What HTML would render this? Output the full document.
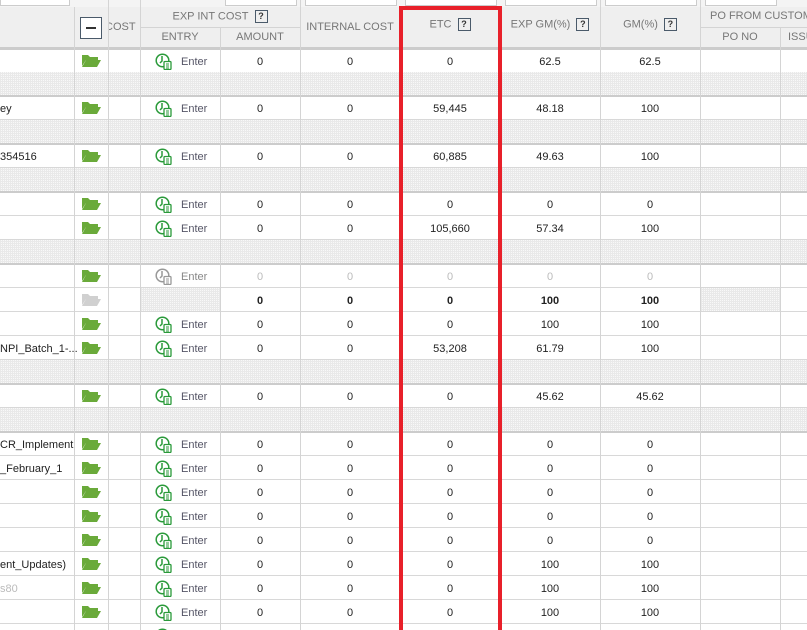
<!DOCTYPE html><html><head><style>
html,body{margin:0;width:807px;height:630px;overflow:hidden}
body{background:#fff;font-family:"Liberation Sans",sans-serif;font-size:11px;color:#222;position:relative}
.a{position:absolute}
.hd{position:absolute;left:0;top:7px;width:807px;height:40px;background:#efefef;border-bottom:3px solid #ccc}
.ht{position:absolute;color:#777;font-size:11px;text-align:center}
.q{display:inline-block;width:11px;height:11px;border:1px solid #4a5a6a;font-size:9px;line-height:11px;text-align:center;color:#333;margin-left:6px;vertical-align:middle;font-weight:bold}
.vl{position:absolute;top:0;width:1px;background:#d4d4d4;height:630px}
.row{position:absolute;left:0;width:807px;height:24px}
.dot{background-color:#f8f8f8;background-image:repeating-linear-gradient(0deg,#e9e9e9 0 1px,transparent 1px 2px),repeating-linear-gradient(90deg,#e9e9e9 0 1px,transparent 1px 2px)}
.c{position:absolute;top:1px;height:24px;line-height:24px;text-align:center}
.hl{position:absolute;left:0;width:807px;background:#ccc}
</style></head><body>
<div class="a" style="left:0;top:0;width:807px;height:7px;background:#f4f4f4"></div>
<div class="a" style="left:0;top:-3px;width:68px;height:7px;border:1px solid #ccc;background:#fff"></div>
<div class="a" style="left:225px;top:-3px;width:70px;height:7px;border:1px solid #ccc;background:#fff"></div>
<div class="a" style="left:305px;top:-3px;width:90px;height:7px;border:1px solid #ccc;background:#fff"></div>
<div class="a" style="left:405px;top:-3px;width:90px;height:7px;border:1px solid #ccc;background:#fff"></div>
<div class="a" style="left:505px;top:-3px;width:90px;height:7px;border:1px solid #ccc;background:#fff"></div>
<div class="a" style="left:605px;top:-3px;width:90px;height:7px;border:1px solid #ccc;background:#fff"></div>
<div class="a" style="left:705px;top:-3px;width:70px;height:7px;border:1px solid #ccc;background:#fff"></div>
<div class="hd"></div>
<div class="a" style="left:140px;top:27px;width:160px;height:1px;background:#d4d4d4"></div>
<div class="a" style="left:700px;top:27px;width:107px;height:1px;background:#d4d4d4"></div>
<div class="ht" style="left:140px;top:10px;width:160px">EXP INT COST<span class="q">?</span></div>
<div class="ht" style="left:140px;top:31px;width:80px">ENTRY</div>
<div class="ht" style="left:220px;top:31px;width:80px">AMOUNT</div>
<div class="ht" style="left:300px;top:21px;width:100px">INTERNAL COST</div>
<div class="ht" style="left:400px;top:18px;width:100px">ETC<span class="q">?</span></div>
<div class="ht" style="left:500px;top:18px;width:100px">EXP GM(%)<span class="q">?</span></div>
<div class="ht" style="left:600px;top:18px;width:100px">GM(%)<span class="q">?</span></div>
<div class="ht" style="left:710px;top:10px;width:97px;text-align:left;white-space:nowrap;overflow:hidden">PO FROM CUSTOMER</div>
<div class="ht" style="left:700px;top:31px;width:80px">PO NO</div>
<div class="ht" style="left:788px;top:31px;text-align:left">ISSUE</div>
<div class="a" style="left:109px;top:21px;width:31px;overflow:hidden;color:#777;white-space:nowrap"><span style="margin-left:-4px">COST</span></div>
<div class="a" style="left:80px;top:17px;width:20px;height:20px;border:1px solid #4a5a6a;background:#fff"><div class="a" style="left:5px;top:9px;width:10px;height:2px;background:#333"></div></div>
<div id="rows"></div>
<div class="vl" style="left:74px;top:7px"></div>
<div class="vl" style="left:108px;top:0"></div>
<div class="vl" style="left:140px;top:0"></div>
<div class="vl" style="left:220px;top:28px"></div>
<div class="vl" style="left:300px;top:0"></div>
<div class="vl" style="left:600px;top:0"></div>
<div class="vl" style="left:700px;top:0"></div>
<div class="vl" style="left:780px;top:28px"></div>
<div class="a" style="left:399px;top:6px;width:95px;height:624px;border:4px solid #e8202a;border-bottom:none"></div>
<script>
var F='<svg width="20" height="14" viewBox="0 0 20 14"><path d="M1 1h6l2 2h8v3H5L1 12z" fill="C"/><path d="M5 6h15l-4 7H1z" fill="C"/></svg>';
function ic(col){return '<svg width="17" height="17" viewBox="0 0 17 17" style="position:absolute;left:155px;top:4px"><circle cx="7.5" cy="7.5" r="6.3" fill="none" stroke="'+col+'" stroke-width="1.5"/><path d="M7 3v5l-2 2" fill="none" stroke="'+col+'" stroke-width="1.5"/><rect x="9" y="8.5" width="7" height="8" rx="1" fill="#fff" stroke="'+col+'" stroke-width="1.3"/><path d="M11 11h3M11 13h3M11 15h3" stroke="'+col+'" stroke-width="1"/></svg>';}
var R=[
[49,'d','','g','g',['0','0','0','62.5','62.5'],0],
[72,'x'],
[96,'d','ey','g','g',['0','0','59,445','48.18','100'],0],
[120,'x'],
[144,'d','354516','g','g',['0','0','60,885','49.63','100'],0],
[168,'x'],
[192,'d','','g','g',['0','0','0','0','0'],0],
[216,'d','','g','g',['0','0','105,660','57.34','100'],0],
[240,'x'],
[264,'d','','g','n',['0','0','0','0','0'],1],
[288,'d','','n','x',['0','0','0','100','100'],2],
[312,'d','','g','g',['0','0','0','100','100'],0],
[336,'d','NPI_Batch_1-...','g','g',['0','0','53,208','61.79','100'],0],
[360,'x'],
[384,'d','','g','g',['0','0','0','45.62','45.62'],0],
[408,'x'],
[432,'d','CR_Implement','g','g',['0','0','0','0','0'],0],
[456,'d','_February_1','g','g',['0','0','0','0','0'],0],
[480,'d','','g','g',['0','0','0','0','0'],0],
[504,'d','','g','g',['0','0','0','0','0'],0],
[528,'d','','g','g',['0','0','0','0','0'],0],
[552,'d','ent_Updates)','g','g',['0','0','0','100','100'],0],
[576,'d','s80','g','g',['0','0','0','100','100'],3],
[600,'d','','g','g',['0','0','0','100','100'],0]];
var h='',X=[220,300,400,500,600],W=[80,100,100,100,100];
R.forEach(function(r){
 if(r[1]=='x'){h+='<div class="row dot" style="top:'+r[0]+'px"></div><div class="hl" style="top:'+(r[0]+23)+'px;height:2px"></div>';return;}
 h+='<div class="row" style="top:'+r[0]+'px">';
 h+='<div class="c" style="left:0;text-align:left;color:'+(r[6]==3?'#bbb':'#222')+'">'+r[2]+'</div>';
 h+='<div class="a" style="left:81px;top:5px">'+F.replace(/C/g,r[3]=='g'?'#6aaa3a':'#d0d0d0')+'</div>';
 if(r[4]=='x')h+='<div class="a dot" style="left:141px;top:0;width:79px;height:24px"></div>';
 else{var col=r[4]=='g'?'#2a9a3a':'#999';h+=ic(col)+'<div class="c" style="left:181px;color:'+(r[4]=='g'?'#556':'#888')+'">Enter</div>';}
 for(var i=0;i<5;i++)h+='<div class="c" style="left:'+X[i]+'px;width:'+W[i]+'px;'+(r[6]==1?'color:#bbb;':'')+(r[6]==2?'font-weight:bold;':'')+'">'+r[5][i]+'</div>';
 if(r[6]==2)h+='<div class="a dot" style="left:701px;top:0;width:79px;height:24px"></div>';
 h+='</div><div class="hl" style="top:'+(r[0]+23)+'px;height:1px;background:#d8d8d8"></div>';
});
h+='<div class="row" style="top:624px"><div class="a" style="left:81px;top:5px">'+F.replace(/C/g,'#6aaa3a')+'</div>'+ic('#2a9a3a')+'</div>';
document.getElementById('rows').innerHTML=h;
</script>
</body></html>
